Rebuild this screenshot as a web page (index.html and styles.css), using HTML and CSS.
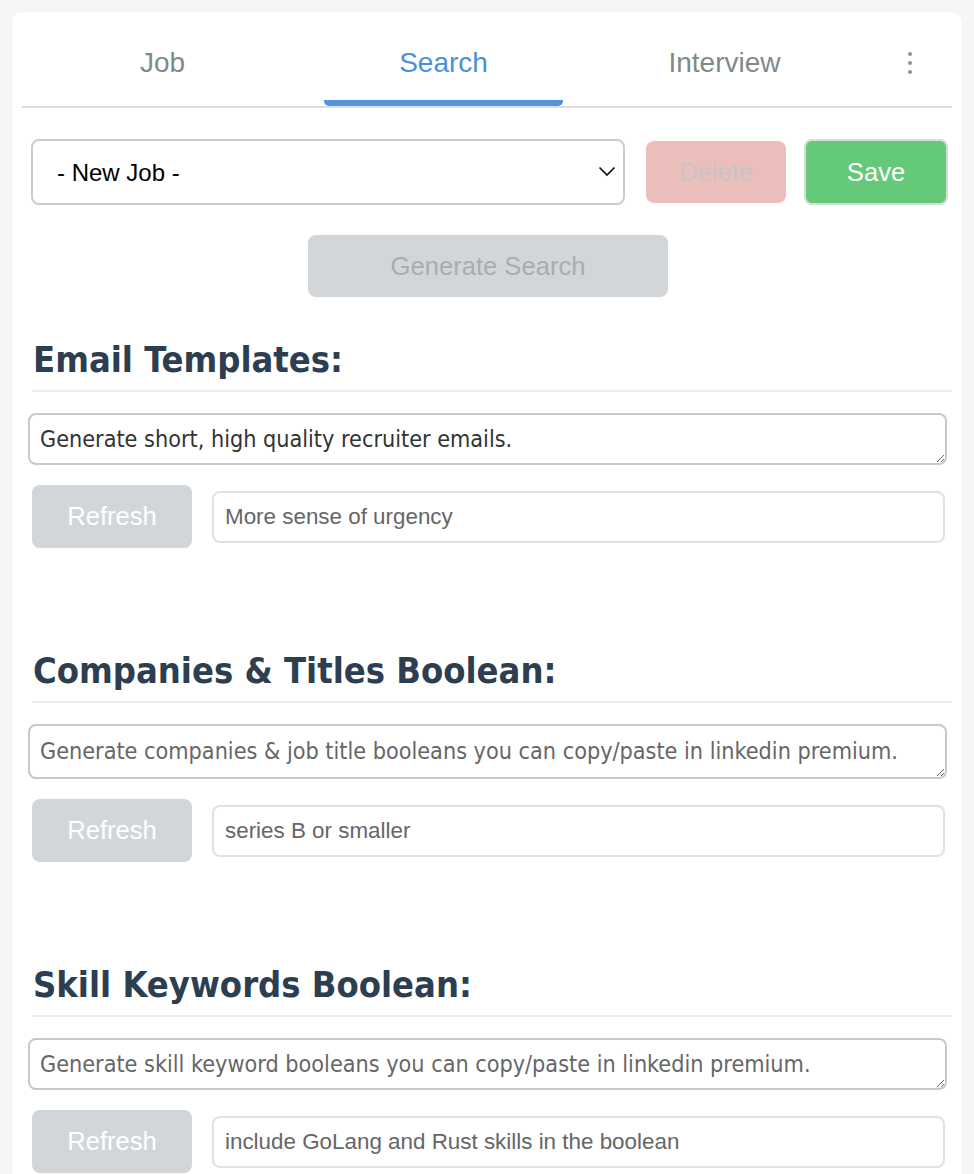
FILE: index.html
```html
<!DOCTYPE html>
<html>
<head>
<meta charset="utf-8">
<link rel="stylesheet" href="styles.css">
</head>
<body>
<div class="card">
  <nav class="tabs">
    <div class="tab">Job</div>
    <div class="tab active">Search</div>
    <div class="tab">Interview</div>
    <div class="more">
      <svg width="6" height="24" viewBox="0 0 6 24"><circle cx="3" cy="3" r="2" fill="#8a9396"/><circle cx="3" cy="12" r="2" fill="#8a9396"/><circle cx="3" cy="21" r="2" fill="#8a9396"/></svg>
    </div>
  </nav>

  <div class="toolbar">
    <div class="select-wrap">
      <select class="job-select"><option>- New Job -</option></select>
      <svg class="chev" width="18" height="11" viewBox="0 0 18 11"><path d="M1.5 1.5 L9 9 L16.5 1.5" fill="none" stroke="#111" stroke-width="1.7"/></svg>
    </div>
    <button class="btn btn-delete">Delete</button>
    <button class="btn btn-save">Save</button>
  </div>

  <div class="gen-row">
    <button class="btn btn-generate">Generate Search</button>
  </div>

  <section class="block">
    <h2 class="heading">Email Templates:</h2>
    <textarea class="prompt dark" rows="1">Generate short, high quality recruiter emails.</textarea>
    <div class="refresh-row">
      <button class="btn btn-refresh">Refresh</button>
      <input class="tweak" type="text" value="More sense of urgency">
    </div>
  </section>

  <section class="block">
    <h2 class="heading">Companies &amp; Titles Boolean:</h2>
    <textarea class="prompt tall" rows="1">Generate companies &amp; job title booleans you can copy/paste in linkedin premium.</textarea>
    <div class="refresh-row">
      <button class="btn btn-refresh">Refresh</button>
      <input class="tweak" type="text" value="series B or smaller">
    </div>
  </section>

  <section class="block">
    <h2 class="heading">Skill Keywords Boolean:</h2>
    <textarea class="prompt" rows="1">Generate skill keyword booleans you can copy/paste in linkedin premium.</textarea>
    <div class="refresh-row">
      <button class="btn btn-refresh">Refresh</button>
      <input class="tweak" type="text" value="include GoLang and Rust skills in the boolean">
    </div>
  </section>
</div>
</body>
</html>
```
FILE: styles.css
```css
* { box-sizing: border-box; }
html, body { margin: 0; padding: 0; }
body {
  background: #f5f6f8;
  padding: 12px 12px 0 12px;
  font-family: "Liberation Sans", Arial, sans-serif;
  height: 1174px;
  overflow: hidden;
}
.card {
  background: #fff;
  border-radius: 10px;
  box-shadow: 0 1px 3px rgba(0,0,0,0.05);
  padding: 0 10px 40px 10px;
  min-height: 1300px;
}
.tabs {
  display: flex;
  height: 96px;
  border-bottom: 2px solid #dedede;
}
.tab {
  position: relative;
  flex: 0 0 281px;
  display: flex;
  align-items: center;
  justify-content: center;
  padding-top: 8px;
  font-size: 28px;
  color: #7f8a8b;
}
.tab.active { color: #4a90d9; }
.tab.active::after {
  content: "";
  position: absolute;
  left: 21px;
  right: 21px;
  bottom: 0;
  height: 6px;
  background: #4f95d9;
  border-radius: 0 0 5px 5px;
}
.more {
  flex: 1;
  display: flex;
  align-items: center;
  justify-content: center;
  padding-top: 8px;
  padding-left: 3px;
}
.toolbar {
  display: flex;
  align-items: center;
  margin-top: 31px;
  padding: 0 4px 0 9px;
}
.select-wrap {
  position: relative;
  flex: 1;
  height: 66px;
}
.job-select {
  -webkit-appearance: none;
  appearance: none;
  width: 100%;
  height: 100%;
  border: 2px solid #cbcbcb;
  border-radius: 8px;
  background: #fff;
  padding: 0 0 0 24px;
  font-family: "Liberation Sans", Arial, sans-serif;
  font-size: 24px;
  color: #000;
}
.chev {
  position: absolute;
  right: 9px;
  top: 27px;
  pointer-events: none;
}
.btn {
  font-family: "Liberation Sans", Arial, sans-serif;
  font-size: 25.6px;
  border: none;
  border-radius: 8px;
  padding: 0;
}
.btn-delete {
  width: 140px;
  height: 62px;
  margin-left: 21px;
  background: #ebbdbb;
  color: #c4c6c6;
}
.btn-save {
  width: 144px;
  height: 66px;
  margin-left: 18px;
  background: #65c97a;
  color: #fff;
  border: 2px solid #d6dcd7;
}
.gen-row {
  display: flex;
  justify-content: center;
  margin-top: 30px;
  padding-left: 2px;
}
.btn-generate {
  width: 360px;
  height: 62px;
  background: #d2d6d9;
  color: #a9adb0;
}
.block {
  margin-top: 44px;
  padding: 0 5px 0 6px;
}
.block + .block { margin-top: 104px; }
.heading {
  margin: 0 -5px 0 4px;
  padding: 0 0 11px 1px;
  border-bottom: 2px solid #ebefef;
  font-family: "DejaVu Sans Condensed", "DejaVu Sans", sans-serif;
  font-weight: bold;
  font-size: 36px;
  line-height: 38px;
  color: #2c3e50;
}
.prompt {
  display: block;
  width: 919px;
  height: 52px;
  margin-top: 21px;
  border: 2px solid #c9c9c9;
  border-radius: 8px;
  padding: 10px 10px;
  font-family: "DejaVu Sans Condensed", "DejaVu Sans", sans-serif;
  font-size: 23.2px;
  line-height: 28px;
  color: #666;
  resize: vertical;
  overflow: hidden;
  white-space: nowrap;
}
.prompt.tall { height: 55px; padding-top: 11px; }
.prompt.dark { color: #333; }
.refresh-row {
  display: flex;
  align-items: center;
  margin-top: 20px;
  padding-left: 4px;
}
.btn-refresh {
  width: 160px;
  height: 63px;
  background: #d2d6d9;
  color: #fff;
  flex: none;
}
.tweak {
  width: 733px;
  height: 52px;
  margin-left: 20px;
  border: 2px solid #e1e1e1;
  border-radius: 8px;
  padding: 0 11px;
  font-family: "Liberation Sans", Arial, sans-serif;
  font-size: 22.4px;
  color: #666;
  background: #fff;
}
```
